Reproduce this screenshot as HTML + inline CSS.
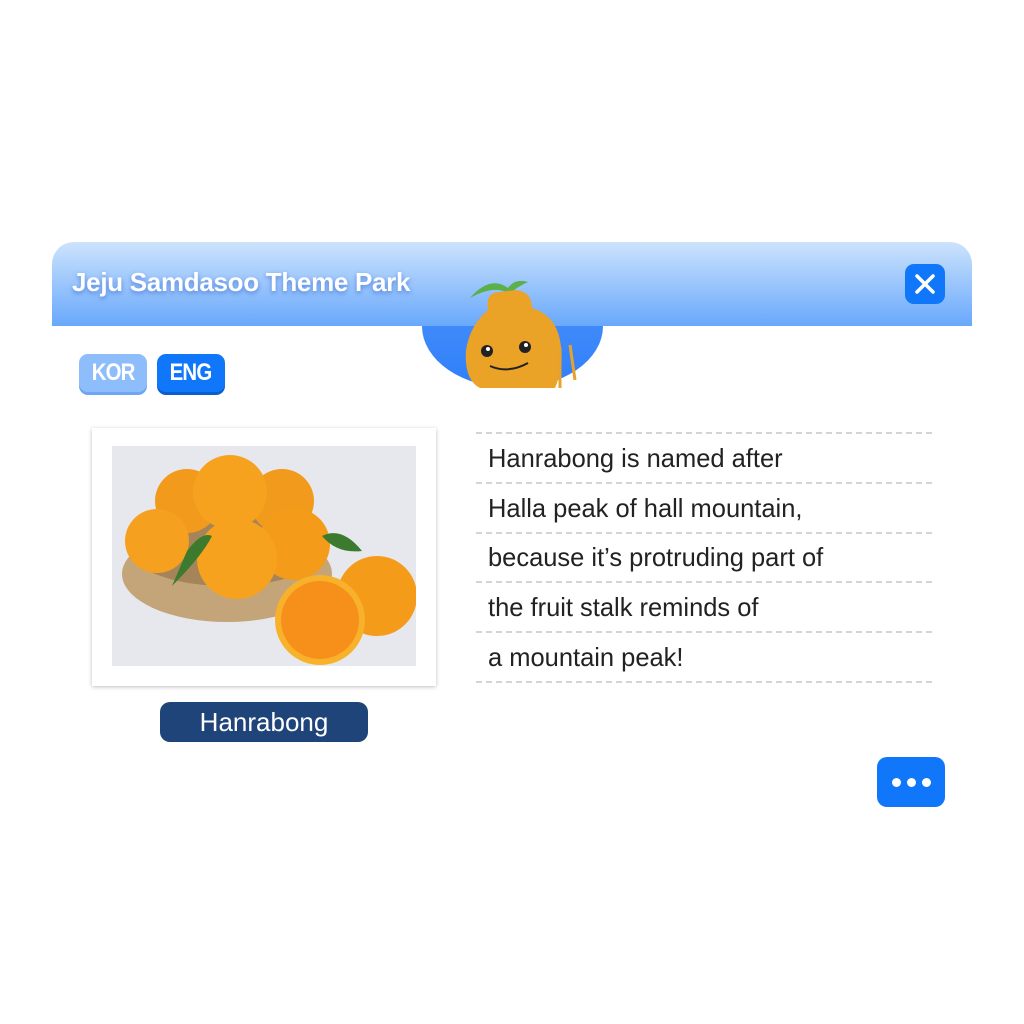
<!DOCTYPE html>
<html><head><meta charset="utf-8"><style>
body{margin:0;width:1024px;height:1024px;background:#fff;position:relative;overflow:hidden;font-family:"Liberation Sans",sans-serif}
.hdr{position:absolute;left:52px;top:242px;width:920px;height:84px;border-radius:22px 22px 0 0;background:linear-gradient(#cde3fd,#68a8fb)}
.bowl{position:absolute;left:422px;top:266px;width:181px;height:122px;border-radius:0 0 91px 91px/0 0 62px 62px;background:linear-gradient(#4f94fb 0%,#2f7ffa 100%);clip-path:inset(60px 0 0 0)}
.title{position:absolute;left:72px;top:267px;color:#fff;font:bold 26px "Liberation Sans",sans-serif;letter-spacing:-0.3px;text-shadow:0 2px 5px rgba(40,90,200,.6)}
.x{position:absolute;left:905px;top:264px;width:40px;height:40px;border-radius:9px;background:#1077fb}
.btn{position:absolute;top:354px;width:68px;height:38px;border-radius:9px;color:#fff;font:bold 24px "Liberation Sans",sans-serif;text-align:center;line-height:38px;letter-spacing:-1px}
.btn span{display:inline-block;transform:scaleX(0.85)}
.frame{position:absolute;left:92px;top:428px;width:344px;height:258px;background:#fff;box-shadow:0 1px 4px rgba(0,0,0,.25)}
.photo{position:absolute;left:20px;top:18px;width:304px;height:220px;background:#e7e8ed;overflow:hidden}
.lbl{position:absolute;left:160px;top:702px;width:208px;height:40px;border-radius:10px;background:#1f4479;color:#fff;font-size:26px;text-align:center;line-height:40px}
.line{position:absolute;left:476px;width:456px;height:0;border-top:2px dashed #d4d4d4}
.txt{position:absolute;left:488px;font-size:26px;color:#222;transform:scaleX(0.98);transform-origin:left;white-space:nowrap}
.more{position:absolute;left:877px;top:757px;width:68px;height:50px;border-radius:10px;background:#1077fb}
.more i{position:absolute;top:21px;width:9px;height:9px;border-radius:50%;background:#fff}
</style></head><body>
<div class="hdr"></div>
<div class="bowl"></div>
<svg style="position:absolute;left:440px;top:270px" width="150" height="118" viewBox="0 0 150 118">
<path d="M30 28 Q50 5 68 18 Q75 8 88 12 Q75 18 70 24 Q55 14 30 28Z" fill="#5bb04a"/>
<path d="M60 22 Q45 22 48 40 Q30 55 26 80 Q24 110 40 118 L115 118 Q125 95 120 70 Q115 45 92 38 Q92 22 76 20Z" fill="#eaa326"/>
<line x1="120" y1="78" x2="120" y2="118" stroke="#e8a22a" stroke-width="3"/>
<line x1="130" y1="75" x2="135" y2="110" stroke="#e8a22a" stroke-width="3"/>
<circle cx="47" cy="81" r="6" fill="#222"/><circle cx="85" cy="77" r="6" fill="#222"/>
<circle cx="48" cy="79" r="2" fill="#fff"/><circle cx="86" cy="75" r="2" fill="#fff"/>
<path d="M50 96 Q68 104 88 93" stroke="#222" stroke-width="2" fill="none"/>
</svg>
<div class="title">Jeju Samdasoo Theme Park</div>
<div class="x"><svg width="40" height="40"><path d="M12 12L28 28M28 12L12 28" stroke="#fff" stroke-width="3.5" stroke-linecap="round"/></svg></div>
<div class="btn" style="left:79px;background:#8dbefb;box-shadow:0 3px 0 #6ea6f5"><span>KOR</span></div>
<div class="btn" style="left:157px;background:#1077fb;box-shadow:0 3px 0 #0a5fd0"><span>ENG</span></div>
<div class="frame"><div class="photo">
<svg width="304" height="220" viewBox="0 0 304 220">
<ellipse cx="115" cy="128" rx="105" ry="48" fill="#c4a57a"/>
<ellipse cx="115" cy="105" rx="95" ry="35" fill="#a6845a"/>
<circle cx="75" cy="55" r="32" fill="#f29a1c"/><circle cx="170" cy="55" r="32" fill="#f29a1c"/>
<circle cx="118" cy="46" r="37" fill="#f7a21e"/>
<circle cx="45" cy="95" r="32" fill="#f5a01e"/><circle cx="182" cy="98" r="36" fill="#f59b1a"/>
<circle cx="125" cy="113" r="40" fill="#f7a21e"/>
<circle cx="265" cy="150" r="40" fill="#f59b1a"/>
<circle cx="208" cy="174" r="45" fill="#f8b12a"/><circle cx="208" cy="174" r="39" fill="#f6901a"/>
<path d="M75 105 Q90 85 100 90 Q90 110 60 140Z" fill="#3c7a2e"/>
<path d="M210 90 Q230 80 250 105 Q225 108 210 90Z" fill="#3c7a2e"/>
</svg></div></div>
<div class="lbl">Hanrabong</div>
<div class="line" style="top:432px"></div>
<div class="line" style="top:482px"></div>
<div class="line" style="top:532px"></div>
<div class="line" style="top:581px"></div>
<div class="line" style="top:631px"></div>
<div class="line" style="top:681px"></div>
<div class="txt" style="top:443px">Hanrabong is named after</div>
<div class="txt" style="top:493px">Halla peak of hall mountain,</div>
<div class="txt" style="top:542px">because it’s protruding part of</div>
<div class="txt" style="top:592px">the fruit stalk reminds of</div>
<div class="txt" style="top:642px">a mountain peak!</div>
<div class="more"><i style="left:15px"></i><i style="left:30px"></i><i style="left:45px"></i></div>
</body></html>
